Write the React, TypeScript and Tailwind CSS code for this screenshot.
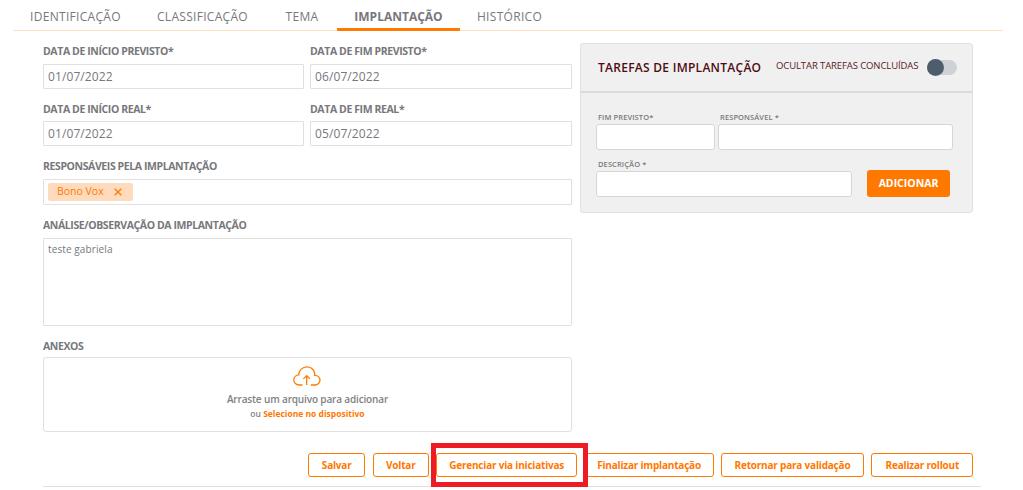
import { ReactNode } from 'react'
import clsx from 'clsx'

const TABS = [
  { label: 'IDENTIFICAÇÃO', size: 'w-[125px]' },
  { label: 'CLASSIFICAÇÃO', size: 'w-[129px]' },
  { label: 'TEMA', size: 'w-[70px]' },
  { label: 'IMPLANTAÇÃO', size: 'w-[123px]', active: true },
  { label: 'HISTÓRICO', size: 'w-[99px]' },
]

const ACTIONS = [
  { label: 'Salvar', size: 'w-[57.4px]' },
  { label: 'Voltar', size: 'w-[56px]' },
  { label: 'Gerenciar via iniciativas', size: 'w-[141px]', highlighted: true },
  { label: 'Finalizar implantação', size: 'w-[129px]' },
  { label: 'Retornar para validação', size: 'w-[143px]' },
  { label: 'Realizar rollout', size: 'w-[102px]' },
]

interface FieldProps {
  label: string
  className?: string
  labelHeight?: string
  children: ReactNode
}

function Field({ label, className, labelHeight = 'h-[21px]', children }: FieldProps) {
  return (
    <div className={className}>
      <label
        className={clsx(
          'block whitespace-nowrap text-[10.5px] font-bold leading-[17px] tracking-[-0.4px] text-[#77787b]',
          labelHeight,
        )}
      >
        {label}
      </label>
      {children}
    </div>
  )
}

function DateInput({ value }: { value: string }) {
  return (
    <div className="h-[25px] rounded-[1px] border border-[#e0e0e0] pl-1 text-[12px] leading-[23px] tracking-[0.1px] text-[#77787b]">
      {value}
    </div>
  )
}

function TaskInput({ label, className }: { label: string; className: string }) {
  return (
    <div className={className}>
      <label className="block h-[13px] whitespace-nowrap pl-[2px] text-[7.5px] font-semibold leading-[12px] tracking-[0.1px] text-[#77787b]">
        {label}
      </label>
      <div className="h-[26px] rounded-[3px] border border-[#d6d6d6] bg-white" />
    </div>
  )
}

function CloudUpload() {
  return (
    <svg className="mr-px" width="28" height="20" viewBox="0 0 28 20" fill="none" stroke="#ff7800" strokeWidth="1.300">
      <path d="M9.500 19H6.200C3.200 19 .8 16.800 .8 13.900c0-2.800 2.200-5 5-5.100C6 4.400 9.400 .8 13.900 .8c3.700 0 6.800 2.500 7.700 6.100.2.800.2 1.600.1 2.400 3 .1 5.300 2.100 5.300 4.800S24.800 19 22 19h-4.200" />
      <path d="M13.700 19V9.800M10.400 12.900l3.300-3.300 3.300 3.300" />
    </svg>
  )
}

export default function App() {
  return (
    <div className="h-[490px] w-[1023px] overflow-hidden bg-white font-['Open_Sans','Noto_Sans',sans-serif]">
      <nav className="ml-[13px] flex h-[31px] w-[990px] border-b border-[#ffe1c2]">
        {TABS.map((tab) => (
          <button
            key={tab.label}
            className={clsx(
              'flex h-[31px] shrink-0 justify-center whitespace-nowrap pt-[8px] text-[12px] leading-[18px] text-[#77787b]',
              tab.size,
              tab.active ? 'rounded-[1px] border-b-[3px] border-[#ff7800] font-bold' : 'tracking-[0.3px]',
            )}
          >
            {tab.label}
          </button>
        ))}
      </nav>

      <div className="ml-[43px] flex gap-2 pt-3">
        <main className="w-[529px]">
          <div className="grid grid-cols-[261px_262px] gap-x-[6px]">
            <Field label="DATA DE INÍCIO PREVISTO*" className="h-[58px]">
              <DateInput value="01/07/2022" />
            </Field>
            <Field label="DATA DE FIM PREVISTO*" className="h-[58px]">
              <DateInput value="06/07/2022" />
            </Field>
            <Field label="DATA DE INÍCIO REAL*" className="h-[57px]" labelHeight="h-[20px]">
              <DateInput value="01/07/2022" />
            </Field>
            <Field label="DATA DE FIM REAL*" className="h-[57px]" labelHeight="h-[20px]">
              <DateInput value="05/07/2022" />
            </Field>
          </div>

          <Field label="RESPONSÁVEIS PELA IMPLANTAÇÃO" className="h-[59px]">
            <div className="h-[26px] rounded-[1px] border border-[#e0e0e0] px-1 py-[3px]">
              <span className="flex h-[18px] w-[85px] items-center rounded-[2px] bg-[#ffdbbd] pl-[9px] text-[10.5px] text-[#ff7800]">
                Bono Vox
                <svg className="ml-auto mr-[11px]" width="8" height="8" viewBox="0 0 8 8" stroke="#ff7800" strokeWidth="1.300">
                  <path d="M.7.7l6.600 6.600M7.300.7L.7 7.300" />
                </svg>
              </span>
            </div>
          </Field>

          <Field label="ANÁLISE/OBSERVAÇÃO DA IMPLANTAÇÃO" className="h-[121px]">
            <div className="h-[88px] rounded-[1px] border border-[#e0e0e0] pl-1 pt-[3px] text-[10px] leading-[15px] tracking-[0.1px] text-[#77787b]">
              teste gabriela
            </div>
          </Field>

          <Field label="ANEXOS" labelHeight="h-[19px]">
            <div className="flex h-[75px] flex-col items-center rounded-[3px] border border-[#e0e0e0] pt-[8px]">
              <CloudUpload />
              <p className="mt-[6px] text-[10px] font-semibold leading-[15px] tracking-[-0.15px] text-[#808184]">
                Arraste um arquivo para adicionar
              </p>
              <p className="text-[8.5px] font-semibold leading-[14px] text-[#808184]">
                ou <a className="font-bold text-[#ff7800]">Selecione no dispositivo</a>
              </p>
            </div>
          </Field>
        </main>

        <aside className="h-[170px] w-[393px] rounded-[3px] border border-[#e0e0e0] bg-[#f0f0f0]">
          <header className="flex h-[49px] items-center border-b-2 border-[#dadada] pl-[17px] pr-[15px]">
            <h2 className="w-[178px] whitespace-nowrap text-[12px] font-semibold tracking-[0.27px] text-[#4d0d10]">
              TAREFAS DE IMPLANTAÇÃO
            </h2>
            <span className="whitespace-nowrap pb-[3px] text-[9.5px] tracking-[-0.1px] text-[#5b1a1c]">
              OCULTAR TAREFAS CONCLUÍDAS
            </span>
            <div className="ml-auto flex h-[15px] w-[30px] items-center rounded-full bg-[#ced2d6]">
              <div className="size-[17px] shrink-0 rounded-full bg-[#4e5d6c]" />
            </div>
          </header>
          <div className="flex flex-col gap-2 pl-[15px] pt-[18px]">
            <div className="flex gap-[3px]">
              <TaskInput label="FIM PREVISTO*" className="w-[119px]" />
              <TaskInput label="RESPONSÁVEL *" className="w-[235px]" />
            </div>
            <div className="flex items-end gap-[15px]">
              <TaskInput label="DESCRIÇÃO *" className="w-[256px]" />
              <button className="h-[27px] w-[83px] rounded-[3px] bg-[#ff7800] text-[10.5px] font-bold text-white">
                ADICIONAR
              </button>
            </div>
          </div>
        </aside>
      </div>

      <footer className="ml-[43px] mt-[21px] flex h-[34px] w-[938px] gap-[7.4px] border-b border-[#e0e0e0] pl-[265px]">
        {ACTIONS.map((action) => (
          <div key={action.label} className={clsx('relative h-[24px] shrink-0', action.size)}>
            <button className="flex h-full w-full items-center justify-center whitespace-nowrap rounded-[3px] border border-[#ff7800] pb-px text-[10px] font-bold leading-none tracking-[-0.2px] text-[#ff7800]">
              {action.label}
            </button>
            {action.highlighted && (
              <div className="absolute -left-[5px] -top-[10px] z-10 h-[44px] w-[157px] border-[5px] border-[#ed1c24]" />
            )}
          </div>
        ))}
      </footer>
    </div>
  )
}
